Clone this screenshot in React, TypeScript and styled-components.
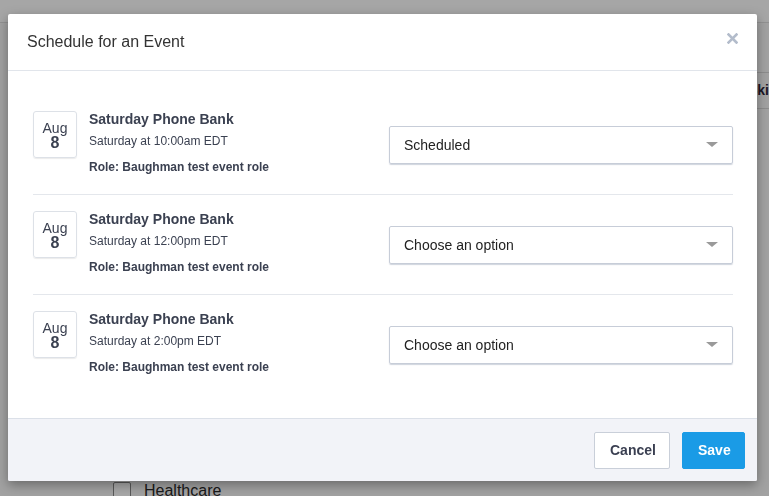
import React from "react";
import styled, { createGlobalStyle } from "styled-components";

const GlobalStyle = createGlobalStyle`
  html, body {
    margin: 0;
    padding: 0;
    font-family: "Liberation Sans", Arial, sans-serif;
  }
`;

type Shift = {
  time: string;
  status: string;
};

const shifts: Shift[] = [
  { time: "Saturday at 10:00am EDT", status: "Scheduled" },
  { time: "Saturday at 12:00pm EDT", status: "Choose an option" },
  { time: "Saturday at 2:00pm EDT", status: "Choose an option" },
];

export default function App() {
  return (
    <>
      <GlobalStyle />
      <Page>
        <TopBar />
        <TableHead>Skip</TableHead>
        <FilterList>
          <FilterItem>
            <CheckBox />
            Healthcare
          </FilterItem>
        </FilterList>
      </Page>
      <Overlay />
      <Modal>
        <ModalHeader>
          <ModalTitle>Schedule for an Event</ModalTitle>
          <CloseButton aria-label="Close">
            <svg width="11" height="11" viewBox="0 0 11 11">
              <path
                d="M1.5 1.5 L9.5 9.5 M9.5 1.5 L1.5 9.5"
                stroke="currentColor"
                strokeWidth="2.6"
                strokeLinecap="square"
              />
            </svg>
          </CloseButton>
        </ModalHeader>
        <ModalBody>
          {shifts.map((shift, i) => (
            <ShiftRow key={i}>
              <DateBox>
                <DateMonth>Aug</DateMonth>
                <DateDay>8</DateDay>
              </DateBox>
              <ShiftInfo>
                <ShiftName>Saturday Phone Bank</ShiftName>
                <ShiftTime>{shift.time}</ShiftTime>
                <ShiftRole>Role: Baughman test event role</ShiftRole>
              </ShiftInfo>
              <SelectBox>
                <SelectValue>{shift.status}</SelectValue>
                <Caret />
              </SelectBox>
            </ShiftRow>
          ))}
        </ModalBody>
        <ModalFooter>
          <CancelButton>Cancel</CancelButton>
          <SaveButton>Save</SaveButton>
        </ModalFooter>
      </Modal>
    </>
  );
}

const Page = styled.div`
  min-height: 100vh;
  background: #f6f6f6;
  overflow: hidden;
`;

const TopBar = styled.div`
  height: 22px;
  background: #fcfcfc;
  border-bottom: 1px solid #dedede;
`;

const TableHead = styled.div`
  margin: 49px 0 0 600px;
  height: 35px;
  line-height: 35px;
  padding-left: 148px;
  white-space: nowrap;
  border-top: 1px solid #d6d6d6;
  border-bottom: 1px solid #d6d6d6;
  font-size: 14px;
  font-weight: bold;
  color: #2d2436;
`;

const FilterList = styled.div`
  padding: 373px 0 0 113px;
`;

const FilterItem = styled.label`
  display: flex;
  align-items: center;
  gap: 13px;
  font-size: 16px;
  color: #2a2a2a;
`;

const CheckBox = styled.span`
  width: 16px;
  height: 16px;
  border: 1px solid #888;
  border-radius: 2px;
  background: #fff;
`;

const Overlay = styled.div`
  position: fixed;
  inset: 0;
  background: rgba(0, 0, 0, 0.34);
`;

const Modal = styled.div`
  position: fixed;
  left: 8px;
  top: 14px;
  width: 749px;
  background: #ffffff;
  border-radius: 2px;
  box-shadow: 0 4px 12px rgba(0, 0, 0, 0.35);
  display: flex;
  flex-direction: column;
  overflow: hidden;
`;

const ModalHeader = styled.div`
  height: 56px;
  display: flex;
  align-items: center;
  justify-content: space-between;
  padding: 0 19px;
  border-bottom: 1px solid #e1e5eb;
`;

const ModalTitle = styled.h2`
  margin: 0;
  font-size: 16px;
  font-weight: normal;
  color: #333333;
`;

const CloseButton = styled.span`
  display: flex;
  color: #b3bccb;
  margin-top: -8px;
`;

const ModalBody = styled.div`
  padding: 23px 24px 24px 25px;
  height: 300px;
`;

const ShiftRow = styled.div`
  display: flex;
  align-items: center;
  height: 100px;
  box-sizing: border-box;
  padding-top: 1px;

  & + & {
    border-top: 1px solid #e4e7ec;
    padding-top: 0;
  }
`;

const DateBox = styled.div`
  width: 44px;
  height: 47px;
  box-sizing: border-box;
  border: 1px solid #dde1e7;
  border-radius: 3px;
  box-shadow: 0 1px 1px rgba(0, 0, 0, 0.08);
  display: flex;
  flex-direction: column;
  align-items: center;
  justify-content: center;
  color: #3b4151;
  align-self: flex-start;
  margin-top: 16px;
`;

const DateMonth = styled.span`
  font-size: 14px;
  line-height: 14px;
  margin-top: 1px;
`;

const DateDay = styled.span`
  font-size: 16px;
  font-weight: bold;
  line-height: 15px;
`;

const ShiftInfo = styled.div`
  flex: 1;
  align-self: flex-start;
  display: flex;
  flex-direction: column;
  margin: 16px 0 0 12px;
  color: #3b4151;
`;

const ShiftName = styled.div`
  font-size: 14px;
  font-weight: bold;
  line-height: 16px;
`;

const ShiftTime = styled.div`
  font-size: 12px;
  line-height: 14px;
  margin-top: 7px;
`;

const ShiftRole = styled.div`
  font-size: 12px;
  font-weight: bold;
  line-height: 14px;
  margin-top: 12px;
`;

const SelectBox = styled.div`
  width: 344px;
  height: 38px;
  box-sizing: border-box;
  border: 1px solid #c7cdd8;
  border-radius: 2px;
  box-shadow: 0 1px 1px rgba(120, 135, 160, 0.35);
  display: flex;
  align-items: center;
  justify-content: space-between;
  padding: 0 14px;
`;

const SelectValue = styled.span`
  font-size: 14px;
  color: #222222;
`;

const Caret = styled.span`
  width: 0;
  height: 0;
  border-left: 6px solid transparent;
  border-right: 6px solid transparent;
  border-top: 5px solid #9a9a9a;
`;

const ModalFooter = styled.div`
  height: 62px;
  background: #f2f3f8;
  border-top: 1px solid #dbe0e8;
  display: flex;
  align-items: center;
  justify-content: flex-end;
  gap: 12px;
  padding: 0 12px;
`;

const FooterButton = styled.button`
  height: 37px;
  padding: 0 15px;
  border-radius: 2px;
  font-family: "Liberation Sans", Arial, sans-serif;
  font-size: 14px;
  font-weight: bold;
  cursor: pointer;
`;

const CancelButton = styled(FooterButton)`
  width: 76px;
  background: #ffffff;
  border: 1px solid #c9cfd9;
  color: #3a3f51;
`;

const SaveButton = styled(FooterButton)`
  width: 63px;
  background: #1a9be6;
  border: 1px solid #1a9be6;
  color: #ffffff;
`;
